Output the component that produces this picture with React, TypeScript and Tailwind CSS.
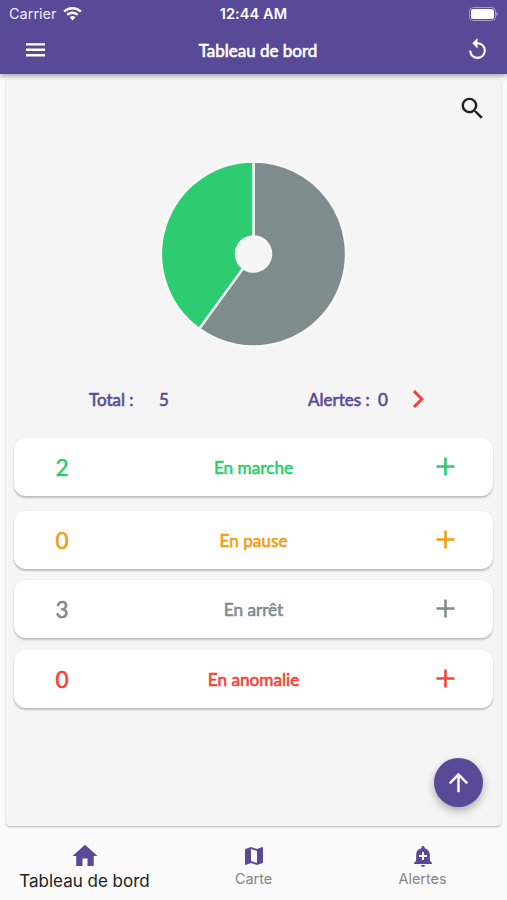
import type { IconType } from 'react-icons'
import {
  MdAdd,
  MdAddAlert,
  MdArrowUpward,
  MdChevronRight,
  MdHome,
  MdMap,
  MdReplay,
  MdSearch,
} from 'react-icons/md'

const STATUSES = [
  { label: 'En marche', count: 2, color: 'text-[#2ecc71]', margin: 'mb-[15px]' },
  { label: 'En pause', count: 0, color: 'text-[#f39c12]', margin: 'mb-[11px]' },
  { label: 'En arrêt', count: 3, color: 'text-[#7f8c8d]', margin: 'mb-[12px]' },
  { label: 'En anomalie', count: 0, color: 'text-[#f44336]', margin: '' },
]

const SLICES = [
  { value: 3, color: '#7f8c8d' },
  { value: 2, color: '#2ecc71' },
]

const LATO = "font-['Lato',sans-serif] [-webkit-text-stroke:0.6px_currentColor]"

function StatusBar() {
  return (
    <div className="grid grid-cols-3 items-center h-[27px] px-[9px] text-white font-['Inter',sans-serif]">
      <div className="flex items-center gap-[6px] text-[14.5px]">
        <span className="opacity-90">Carrier</span>
        <svg width="19" height="14" viewBox="0 0 19 14" fill="currentColor">
          <path d="M9.500 0C13 0 16.300 1.400 18.700 3.700L17 5.500C15 3.600 12.400 2.500 9.500 2.500S4 3.600 2 5.500L.3 3.700C2.700 1.400 6 0 9.500 0Z" />
          <path d="M9.500 4.600c2.300 0 4.400.9 6 2.400l-1.700 1.800C12.700 7.700 11.200 7 9.500 7s-3.200.7-4.300 1.800L3.500 7c1.600-1.500 3.700-2.400 6-2.400Z" />
          <path d="M9.500 9c1.100 0 2.100.4 2.800 1.200L9.500 13.600 6.700 10.200C7.400 9.400 8.400 9 9.500 9Z" />
        </svg>
      </div>
      <div className="text-center text-[14.5px] tracking-[0.1px] font-semibold whitespace-nowrap">12:44 AM</div>
      <svg className="justify-self-end" width="30" height="14" viewBox="0 0 30 14">
        <rect x="1.500" y="0.500" width="26" height="13" rx="4" fill="none" stroke="#fff" strokeOpacity="0.45" />
        <rect x="3" y="2" width="23" height="10" rx="2.500" fill="#fff" />
        <path d="M28.500 4.700c.8.4 1.300 1.300 1.300 2.300s-.5 1.900-1.300 2.300Z" fill="#fff" fillOpacity="0.5" />
      </svg>
    </div>
  )
}

function Header() {
  return (
    <header className="relative z-10 h-[74px] shrink-0 bg-[#594a98] shadow-[0_2px_5px_rgba(0,0,0,0.35)]">
      <StatusBar />
      <div className="grid grid-cols-[1fr_auto_1fr] items-center h-[46px] pl-[26px] pr-[17px] text-white">
        <svg width="19" height="14" viewBox="0 0 19 14" fill="currentColor">
          <path d="M0 .2h19v2.400H0zM0 5.600h19v2.400H0zM0 11h19v2.400H0z" />
        </svg>
        <h1 className={`-mr-px -ml-px translate-y-px text-[17px] ${LATO}`}>Tableau de bord</h1>
        <MdReplay size={25} className="-mt-px justify-self-end" />
      </div>
    </header>
  )
}

function PieChart() {
  const total = SLICES.reduce((sum, s) => sum + s.value, 0)
  const outer = 92.5
  const inner = 17.5
  let angle = 0

  function point(r: number, a: number) {
    return `${r * Math.sin(a)} ${-r * Math.cos(a)}`
  }

  return (
    <svg className="mx-auto block" width="189" height="188" viewBox="-94.500 -94 189 188">
      {SLICES.map(slice => {
        const start = angle
        const end = angle + (slice.value / total) * Math.PI * 2
        const large = end - start > Math.PI ? 1 : 0
        angle = end
        return (
          <path
            key={slice.color}
            d={`M${point(outer, start)}A${outer} ${outer} 0 ${large} 1 ${point(outer, end)}L${point(inner, end)}A${inner} ${inner} 0 ${large} 0 ${point(inner, start)}Z`}
            fill={slice.color}
            stroke="#f8f8f8"
            strokeWidth="2.400"
          />
        )
      })}
    </svg>
  )
}

function Totals() {
  return (
    <div className={`flex items-center h-9 pl-[83px] text-[17px] text-[#594a98] ${LATO}`}>
      <span className="w-[70px]">Total :</span>
      <span className="w-[149px]">5</span>
      <span className="w-[70px]">Alertes :</span>
      <span className="w-[22px]">0</span>
      <MdChevronRight size={36} className="-mt-[2px] text-[#f44336]" />
    </div>
  )
}

function StatusCard({ label, count, color, margin }: (typeof STATUSES)[number]) {
  return (
    <div
      className={`grid grid-cols-[96px_1fr_96px] items-center h-[58px] rounded-[12px] bg-white text-center shadow-[0_2px_2px_rgba(0,0,0,0.22),0_0_2px_rgba(0,0,0,0.06)] ${color} ${margin}`}
    >
      <span className={`pt-[2px] text-[22.5px] ${LATO}`}>{count}</span>
      <span className={`pt-[2px] text-[17.2px] ${LATO}`}>{label}</span>
      <MdAdd size={31} className="-mt-px justify-self-center" />
    </div>
  )
}

function NavItem({ icon: Icon, label, active }: { icon: IconType; label: string; active?: boolean }) {
  return (
    <div className="flex flex-1 flex-col items-center font-['Inter',sans-serif]">
      <div className="flex h-[29px] items-center text-[#594a98]">
        <Icon size={active ? 30 : 24} />
      </div>
      <span
        className={
          active
            ? 'text-[17px] leading-[22px] text-[#212121] whitespace-nowrap'
            : 'text-[14.4px] leading-[18px] text-[#858585]'
        }
      >
        {label}
      </span>
    </div>
  )
}

export default function App() {
  return (
    <div className="flex flex-col w-[507px] h-[900px] overflow-hidden bg-[#fafafa]">
      <Header />

      <main className="relative flex-1 mt-[5px] mx-[6px] rounded-[4px] bg-[#f5f5f5] px-2 shadow-[0_1px_2px_rgba(0,0,0,0.28)]">
        <div className="flex justify-end pt-[15px] pr-[6px] text-[#212121]">
          <MdSearch size={29} />
        </div>
        <div className="pt-[37px]">
          <PieChart />
        </div>
        <div className="-mx-2 pt-[34px] pb-[20px]">
          <Totals />
        </div>
        {STATUSES.map(status => (
          <StatusCard key={status.label} {...status} />
        ))}

        {/* Scroll to top */}
        <button className="absolute right-[18px] bottom-[19px] flex items-center justify-center size-[49px] rounded-full bg-[#594a98] text-white shadow-[0_4px_8px_rgba(0,0,0,0.3)]">
          <MdArrowUpward size={29} />
        </button>
      </main>

      <nav className="flex h-[74px] shrink-0 pt-[15px]">
        <NavItem icon={MdHome} label="Tableau de bord" active />
        <NavItem icon={MdMap} label="Carte" />
        <NavItem icon={MdAddAlert} label="Alertes" />
      </nav>
    </div>
  )
}
